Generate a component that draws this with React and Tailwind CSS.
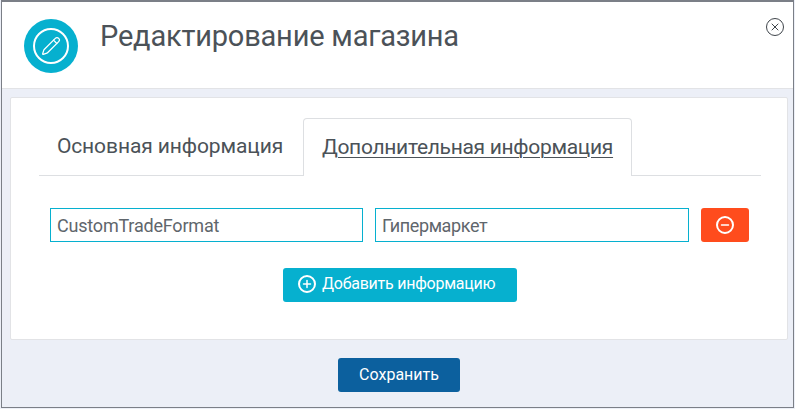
import { Pencil, X, Plus, Minus } from "lucide-react";

const font = "font-['Roboto','Noto_Sans',sans-serif]";

function RoundIcon({ children }) {
  return (
    <span className="grid h-[18px] w-[18px] place-items-center rounded-full border-2 border-white text-white">
      {children}
    </span>
  );
}

export default function App() {
  return (
    <div className={`h-[409px] w-[795px] bg-[#eceff7] pb-px pl-px pr-px ${font}`}>
      <div className="flex h-[408px] w-[793px] flex-col border border-t-2 border-[#7b7f87] bg-[#eceff7]">
        <header className="relative flex h-[87px] shrink-0 items-start border-b border-[#e2e3e6] bg-white pl-[22px] pt-[17px]">
          <span className="grid h-[54px] w-[54px] place-items-center rounded-full bg-[#06b0cf]">
            <span className="grid h-[36px] w-[36px] place-items-center rounded-full border-2 border-white">
              <Pencil size={20} strokeWidth={1.5} className="text-white" />
            </span>
          </span>
          <h1 className="ml-[22px] mt-0 text-[29px] leading-[34px] tracking-[-0.2px] text-[#4b5258]">
            Редактирование магазина
          </h1>
          <span className="absolute right-[9px] top-[16px] grid h-[18px] w-[18px] place-items-center rounded-full border border-[#3f454b] text-[#3f454b]">
            <X size={12} strokeWidth={2} />
          </span>
        </header>

        <div className="flex flex-1 flex-col pl-[8px] pt-[8px]">
          <main className="h-[243px] w-[778px] rounded-[2px] border border-[#e2e3e6] bg-white pl-[28px] pr-[26px] pt-[20px]">
            <div className="flex h-[58px] items-end border-b border-[#dddfe2] pl-[1px]">
              <div className="flex h-[57px] w-[263px] items-center justify-center pr-[3px] text-[21px] tracking-[-0.1px] text-[#4b5258]">
                Основная информация
              </div>
              <div className="relative -mb-px flex h-[58px] w-[329px] items-center justify-center rounded-t-[4px] border border-b-0 border-[#dddfe2] bg-white text-[21px] tracking-[-0.3px] text-[#4b5258] underline decoration-1 underline-offset-[3px]">
                Дополнительная информация
              </div>
            </div>

            <div className="mt-[32px] flex gap-[12px] pl-[11px]">
              <input
                readOnly
                value="CustomTradeFormat"
                className="h-[34px] w-[313px] border border-[#06b0cf] px-[6px] text-[18px] tracking-[-0.2px] text-[#5f666c] outline-none"
              />
              <input
                readOnly
                value="Гипермаркет"
                className="h-[34px] w-[314px] border border-[#06b0cf] px-[6px] text-[18px] tracking-[-0.4px] text-[#5f666c] outline-none"
              />
              <button className="grid h-[34px] w-[48px] place-items-center rounded-[3px] bg-[#ff4c1d]">
                <RoundIcon>
                  <Minus size={12} strokeWidth={3} />
                </RoundIcon>
              </button>
            </div>

            <div className="mt-[26px] flex justify-center">
              <button className="flex h-[34px] w-[234px] items-center gap-[6px] rounded-[3px] bg-[#06b0cf] pb-[2px] pl-[15px] text-[16px] tracking-[-0.25px] text-white">
                <RoundIcon>
                  <Plus size={12} strokeWidth={3} />
                </RoundIcon>
                Добавить информацию
              </button>
            </div>
          </main>

          <div className="mt-[18px] flex w-[778px] justify-center">
            <button className="h-[34px] w-[122px] rounded-[3px] bg-[#0c609e] text-[16px] text-white">
              Сохранить
            </button>
          </div>
        </div>
      </div>
    </div>
  );
}
